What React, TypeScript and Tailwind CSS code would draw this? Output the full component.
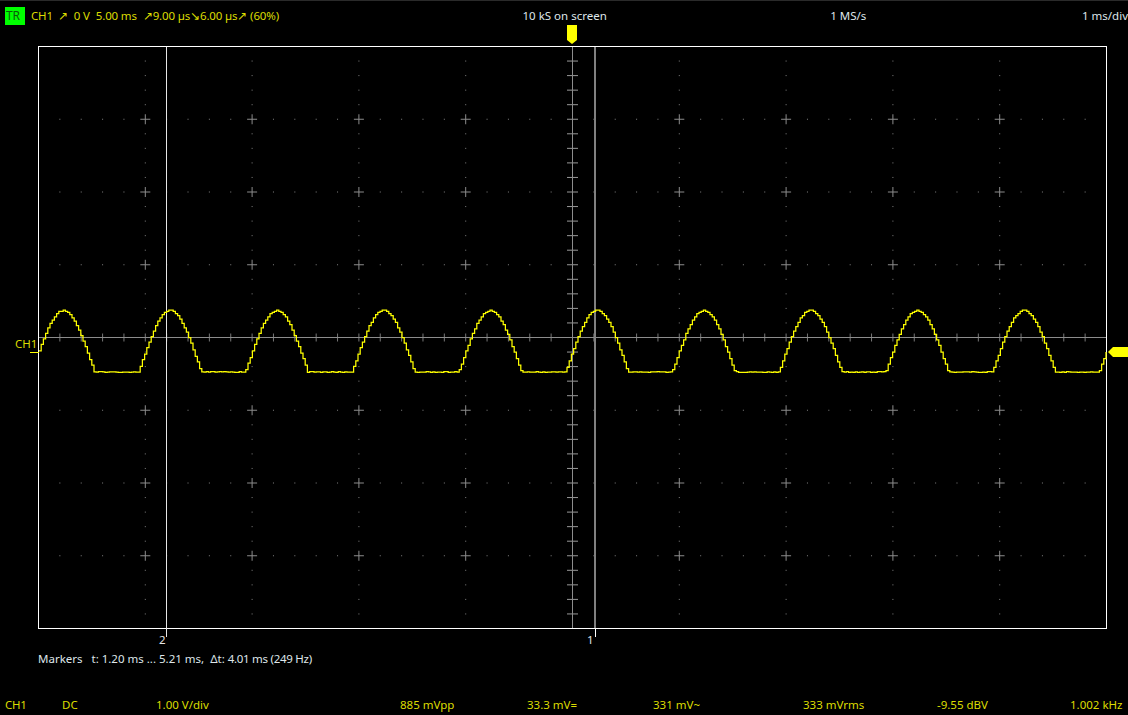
import React from "react";

const X0 = 38.5;
const Y0 = 46.5;
const DX = 106.8;
const DY = 72.75;

function tracePath() {
  const pts: string[] = [];
  let prevY = 0;
  const step = 2.2;
  for (let i = 0; 39 + i * step <= 1106; i++) {
    const x = 39 + i * step;
    const t = (2 * Math.PI * (x - 62.8)) / 106.74;
    let y = 358.9 - 48.4 * Math.cos(t);
    y = Math.round(y / 1.1) * 1.1;
    if (y >= 371.5) {
      const n = Math.sin(i * 12.9898) * 43758.5453;
      y = 372 + (n - Math.floor(n)) * 0.8 - 0.4;
    }
    if (i === 0) pts.push(`M${x.toFixed(1)} ${y.toFixed(1)}`);
    else {
      pts.push(`L${x.toFixed(1)} ${prevY.toFixed(1)}`);
      pts.push(`L${x.toFixed(1)} ${y.toFixed(1)}`);
    }
    prevY = y;
  }
  return pts.join("");
}

function Scope() {
  const dots: React.ReactNode[] = [];
  const vTicks = [1, 2, 3, 4, 6, 7, 8, 9];
  for (let r = 1; r < 8; r++) {
    const y = Y0 + r * DY;
    for (let i = 1; i < 50; i++) {
      const x = X0 + (i * DX) / 5;
      if (r === 4) {
        dots.push(<line key={`h${r}-${i}`} x1={x} x2={x} y1={y - 4} y2={y + 4} stroke="#777" />);
      } else if (i % 5 === 0) {
        if (i !== 25) {
          dots.push(<path key={`c${r}-${i}`} d={`M${x - 5} ${y}H${x + 5}M${x} ${y - 5}V${y + 5}`} stroke="#8c8c8c" fill="none" />);
        } else {
          dots.push(<line key={`t${r}`} x1={x - 5.5} x2={x + 5.5} y1={y} y2={y} stroke="#999" />);
        }
      } else {
        dots.push(<rect key={`d${r}-${i}`} x={x - 0.5} y={y - 0.5} width={1} height={1} fill="#808080" />);
      }
    }
  }
  for (const c of [...vTicks, 5]) {
    const x = X0 + c * DX;
    for (let j = 1; j < 40; j++) {
      if (j % 5 === 0) continue;
      const y = Y0 + (j * DY) / 5;
      if (c === 5) {
        dots.push(<line key={`v${c}-${j}`} x1={x - 5.5} x2={x + 5.5} y1={y} y2={y} stroke="#999" />);
      } else {
        dots.push(<rect key={`v${c}-${j}`} x={x - 0.5} y={y - 0.5} width={1} height={1} fill="#808080" />);
      }
    }
  }
  return (
    <svg viewBox="39 47 1067 581" className="block w-full h-full overflow-visible">
      {dots}
      <line x1="39" x2="1106" y1="337.5" y2="337.5" stroke="#8c8c8c" shapeRendering="crispEdges" />
      <line x1="572.5" x2="572.5" y1="47" y2="628" stroke="#8c8c8c" shapeRendering="crispEdges" />
      <line x1="166.5" x2="166.5" y1="47" y2="637" stroke="#e6e6e6" shapeRendering="crispEdges" />
      <line x1="595" x2="595" y1="47" y2="628" stroke="#808080" strokeWidth="2" shapeRendering="crispEdges" />
      <line x1="595.5" x2="595.5" y1="628" y2="637" stroke="#fff" shapeRendering="crispEdges" />
      <path d={tracePath()} fill="none" stroke="#ffff00" strokeWidth="1.25" />
      <line x1="30" x2="39" y1="352.5" y2="352.5" stroke="#ffff00" shapeRendering="crispEdges" />
      <polygon points="567,25 577,25 577,40 572,44 567,40" fill="#ffff00" />
      <polygon points="1108,352 1113,347 1128,347 1128,357 1113,357" fill="#ffff00" />
    </svg>
  );
}

export default function App() {
  return (
    <div className="w-[1128px] h-[715px] bg-black flex flex-col overflow-hidden font-['Noto_Sans','Open_Sans',sans-serif] text-[11.5px] leading-4 text-[#dcdc00] border-t border-[#2a2a2a]">
      <div className="flex items-start h-[45px] pt-[6px] pl-[5px] shrink-0">
        <div className="w-[518px] flex items-start tracking-[-0.15px]">
          <span className="bg-[#00ff00] text-[#0a5a0a] text-[12px] w-[20px] h-[18px] pl-px leading-[17px]">TR</span>
          <span className="ml-[6px] pt-px whitespace-pre">CH1</span>
          <span className="ml-[5px] pt-px whitespace-pre">↗</span>
          <span className="ml-[6px] pt-px whitespace-pre">0 V</span>
          <span className="ml-[6px] pt-px whitespace-pre">5.00 ms</span>
          <span className="ml-[6px] pt-px whitespace-pre">↗9.00 µs↘6.00 µs↗ (60%)</span>
        </div>
        <span className="w-[308px] pt-px text-[#dfe6ea] whitespace-pre">10 kS on screen</span>
        <span className="w-[252px] pt-px text-[#dfe6ea] whitespace-pre">1 MS/s</span>
        <span className="pt-px text-[#dfe6ea] whitespace-pre">1 ms/div</span>
      </div>

      <div className="relative ml-[38px] w-[1069px] h-[583px] border border-white shrink-0">
        <Scope />
        <span className="absolute left-[-24px] top-[289px] whitespace-pre">CH1</span>
        <span className="absolute left-[120px] top-[585px] text-[#e6e6e6]">2</span>
        <span className="absolute left-[548px] top-[585px] text-[#dfe6ea]">1</span>
      </div>

      <div className="ml-[38px] mt-[22px] text-[#dfe6ea] whitespace-pre shrink-0">Markers   t: 1.20 ms ... 5.21 ms,  Δt: <span className="tracking-[-0.28px]">4.01 ms (249 Hz)</span></div>

      <div className="mt-auto mb-[2px] pl-[5px] flex shrink-0 whitespace-pre">
        <span className="w-[57px] tracking-[-0.3px]">CH1</span>
        <span className="w-[94px]">DC</span>
        <span className="w-[244px]">1.00 V/div</span>
        <span className="w-[127px]">885 mVpp</span>
        <span className="w-[126px]">33.3 mV=</span>
        <span className="w-[150px]">331 mV~</span>
        <span className="w-[134px]">333 mVrms</span>
        <span className="w-[133px]">-9.55 dBV</span>
        <span>1.002 kHz</span>
      </div>
    </div>
  );
}
